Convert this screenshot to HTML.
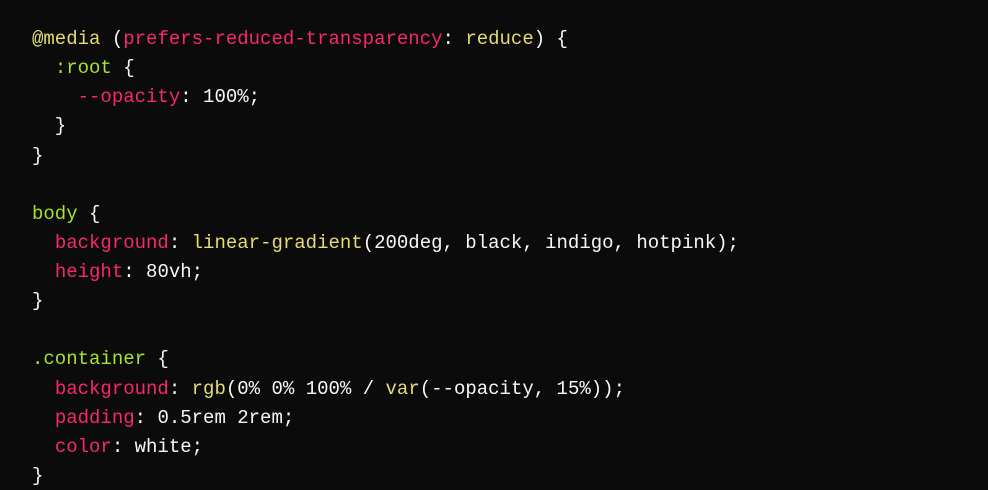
<!DOCTYPE html>
<html><head><meta charset="utf-8"><style>
html,body{margin:0;background:#0b0b0b;width:988px;height:490px;overflow:hidden}
pre{margin:0;padding:25px 0 0 32px;font-family:"Liberation Mono",monospace;font-size:19px;line-height:29.13px;color:#f8f8f2}
.y{color:#e6db74}.p{color:#f92672}.g{color:#a6e22e}
</style></head><body><pre><span class="y">@media</span> (<span class="p">prefers-reduced-transparency</span>: <span class="y">reduce</span>) {
  <span class="g">:root</span> {
    <span class="p">--opacity</span>: 100%;
  }
}

<span class="g">body</span> {
  <span class="p">background</span>: <span class="y">linear-gradient</span>(200deg, black, indigo, hotpink);
  <span class="p">height</span>: 80vh;
}

<span class="g">.container</span> {
  <span class="p">background</span>: <span class="y">rgb</span>(0% 0% 100% / <span class="y">var</span>(--opacity, 15%));
  <span class="p">padding</span>: 0.5rem 2rem;
  <span class="p">color</span>: white;
}</pre></body></html>
